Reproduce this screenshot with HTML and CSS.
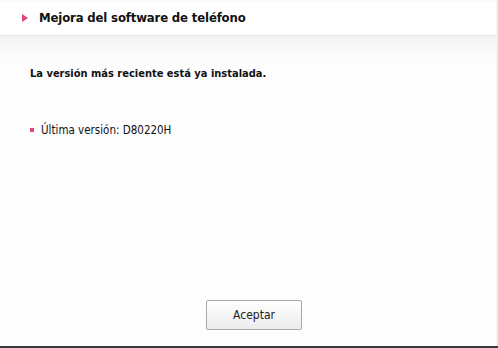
FILE: index.html
```html
<!DOCTYPE html>
<html lang="es">
<head>
  <meta charset="UTF-8" />
  <title>Mejora del software de teléfono</title>
  <link rel="stylesheet" href="styles.css">
</head>
<body>
  <div class="dialog">
    <div class="header">
      <span class="arrow"></span>
      <h2>Mejora del software de teléfono</h2>
    </div>

    <div class="content">
      <p class="status">La versión más reciente está ya instalada.</p>
      <ul class="info">
        <li>Última versión: D80220H</li>
      </ul>
    </div>

    <div class="actions">
      <button class="btn">Aceptar</button>
    </div>
  </div>
  <div class="bottom-strip"></div>
</body>
</html>
```

FILE: styles.css
```css
html, body {
  margin: 0;
  padding: 0;
  height: 100%;
}

body {
  font-family: 'DejaVu Sans Condensed', 'DejaVu Sans', sans-serif;
  background: #fdfdfd;
  color: #111;
  display: flex;
  flex-direction: column;
}

.dialog {
  flex: 1;
  display: flex;
  flex-direction: column;
  border-right: 2px solid #f0f0f0;
  background: linear-gradient(to bottom, #f1f1f1 36px, #fdfdfd 60px);
}

.header {
  height: 36px;
  display: flex;
  align-items: center;
  padding-left: 22px;
  background: linear-gradient(to bottom, #f8f8f8, #ffffff 3px);
  border-bottom: 1px solid #e6e6e6;
  box-sizing: border-box;
}

.arrow {
  width: 0;
  height: 0;
  border-top: 4px solid transparent;
  border-bottom: 4px solid transparent;
  border-left: 6px solid #e0457b;
  margin-right: 11px;
}

.header h2 {
  margin: 0;
  font-size: 13px;
  font-weight: bold;
  letter-spacing: -0.15px;
  color: #111;
}

.content {
  flex: 1;
  padding: 0 30px;
}

.status {
  margin: 31px 0 0;
  font-size: 11px;
  font-weight: bold;
}

.info {
  list-style: none;
  margin: 43px 0 0;
  padding: 0;
  font-size: 11.5px;
}

.info li {
  display: flex;
  align-items: center;
}

.info li::before {
  content: "";
  width: 4px;
  height: 4px;
  background: #e0457b;
  margin-right: 7px;
}

.actions {
  display: flex;
  justify-content: center;
  padding: 0 0 16px 12px;
}

.btn {
  width: 96px;
  height: 30px;
  font-family: inherit;
  font-size: 12px;
  color: #222;
  border: 1px solid #a8a8a8;
  border-radius: 2px;
  background: linear-gradient(to bottom, #ffffff, #ececec);
  cursor: pointer;
}

.bottom-strip {
  height: 2px;
  background: #3a3a3a;
}
```
